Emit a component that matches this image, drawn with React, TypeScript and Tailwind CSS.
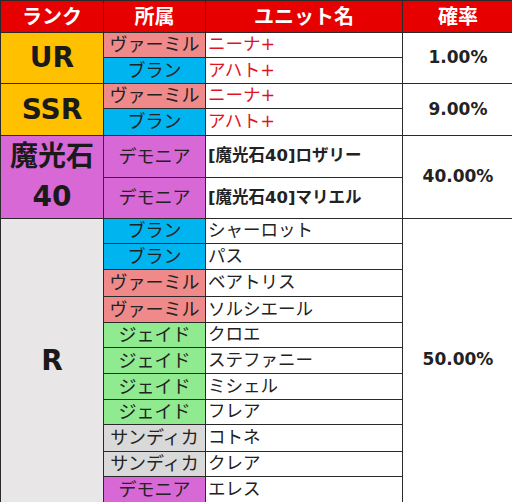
import React from 'react';

const font = { fontFamily: '"DejaVu Sans", "Noto Sans CJK JP", sans-serif' };

type Row = { team: string; unit: string; red?: boolean; bold?: boolean; h: string };

const teamColor: Record<string, string> = {
    ヴァーミル: 'bg-[#f08a8a]',
    ブラン: 'bg-[#00b4f0]',
    ジェイド: 'bg-[#90ea90]',
    サンディカ: 'bg-[#d9d9d9]',
    デモニア: 'bg-[#d868d6]',
};

const groups: { rank: string; rankClass: string; rate: string; rows: Row[] }[] = [
    {
        rank: 'UR',
        rankClass: 'bg-[#ffc000] text-[28px]',
        rate: '1.00%',
        rows: [
            { team: 'ヴァーミル', unit: 'ニーナ+', red: true, h: 'h-[25px]' },
            { team: 'ブラン', unit: 'アハト+', red: true, h: 'h-[26px]' },
        ],
    },
    {
        rank: 'SSR',
        rankClass: 'bg-[#ffc000] text-[28px]',
        rate: '9.00%',
        rows: [
            { team: 'ヴァーミル', unit: 'ニーナ+', red: true, h: 'h-[25px]' },
            { team: 'ブラン', unit: 'アハト+', red: true, h: 'h-[27px]' },
        ],
    },
    {
        rank: '魔光石\n40',
        rankClass: 'bg-[#d868d6] text-[28px] leading-[40px]',
        rate: '40.00%',
        rows: [
            { team: 'デモニア', unit: '[魔光石40]ロザリー', bold: true, h: 'h-[42px]' },
            { team: 'デモニア', unit: '[魔光石40]マリエル', bold: true, h: 'h-[41px]' },
        ],
    },
    {
        rank: 'R',
        rankClass: 'bg-[#e8e6e6] text-[28px]',
        rate: '50.00%',
        rows: [
            { team: 'ブラン', unit: 'シャーロット', h: 'h-[25px]' },
            { team: 'ブラン', unit: 'パス', h: 'h-[26px]' },
            { team: 'ヴァーミル', unit: 'ベアトリス', h: 'h-[27px]' },
            { team: 'ヴァーミル', unit: 'ソルシエール', h: 'h-[26px]' },
            { team: 'ジェイド', unit: 'クロエ', h: 'h-[25px]' },
            { team: 'ジェイド', unit: 'ステファニー', h: 'h-[26px]' },
            { team: 'ジェイド', unit: 'ミシェル', h: 'h-[26px]' },
            { team: 'ジェイド', unit: 'フレア', h: 'h-[25px]' },
            { team: 'サンディカ', unit: 'コトネ', h: 'h-[27px]' },
            { team: 'サンディカ', unit: 'クレア', h: 'h-[25px]' },
            { team: 'デモニア', unit: 'エレス', h: 'h-[26px]' },
        ],
    },
];

const cell = 'border border-[#2a2a2a] p-0';

export default function App() {
    return (
        <div className="w-[512px] h-[502px] overflow-hidden bg-white" style={font}>
            <table className="w-[513px] table-fixed border-collapse text-[#222]">
                <colgroup>
                    <col className="w-[103px]" />
                    <col className="w-[102px]" />
                    <col className="w-[197px]" />
                    <col className="w-[111px]" />
                </colgroup>
                <thead>
                    <tr className="h-[32px] bg-[#e60000] text-white text-[20px] leading-none font-bold">
                        <th className={cell}>ランク</th>
                        <th className={cell}>所属</th>
                        <th className={cell}>ユニット名</th>
                        <th className={cell}>確率</th>
                    </tr>
                </thead>
                <tbody>
                    {groups.map((g) =>
                        g.rows.map((r, i) => (
                            <tr key={g.rank + i} className={r.h}>
                                {i === 0 && (
                                    <td
                                        rowSpan={g.rows.length}
                                        className={`${cell} ${g.rankClass} text-center font-bold whitespace-pre-line text-[#1a1a1a]`}
                                    >
                                        {g.rank}
                                    </td>
                                )}
                                <td className={`${cell} ${teamColor[r.team]} text-center text-[18px] leading-none whitespace-nowrap overflow-hidden`}>
                                    {r.team}
                                </td>
                                <td
                                    className={`${cell} pl-[2px] leading-none whitespace-nowrap ${
                                        r.red ? 'text-[#e0141e]' : ''
                                    } ${r.bold ? 'font-bold text-[16.5px]' : 'text-[17.5px]'}`}
                                >
                                    {r.unit}
                                </td>
                                {i === 0 && (
                                    <td
                                        rowSpan={g.rows.length}
                                        className={`${cell} text-center font-bold text-[17px] ${
                                            g.rank === 'R' ? 'align-top pt-[128px]' : ''
                                        }`}
                                    >
                                        {g.rate}
                                    </td>
                                )}
                            </tr>
                        ))
                    )}
                </tbody>
            </table>
        </div>
    );
}
